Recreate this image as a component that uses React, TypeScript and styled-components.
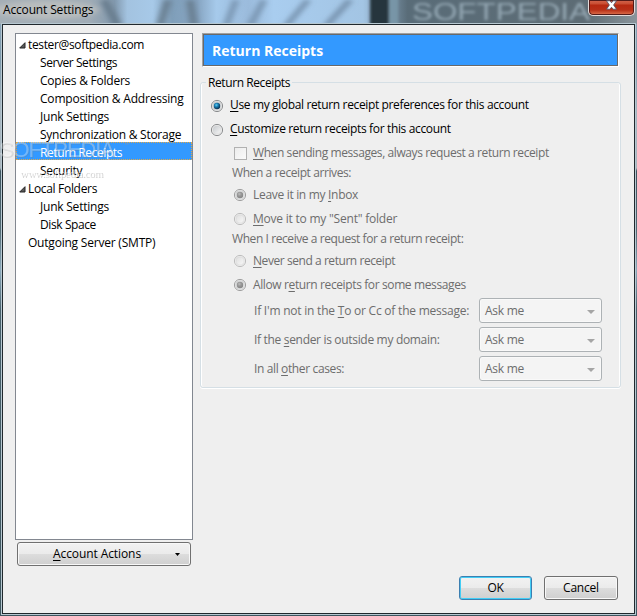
import React from 'react';
import styled, { createGlobalStyle, css } from 'styled-components';

const GlobalStyle = createGlobalStyle`
  * { box-sizing: border-box; }
  body {
    margin: 0;
    overflow: hidden;
    background: #efefef;
    font: 12px/18px "Open Sans", "Noto Sans", sans-serif;
    color: #000;
  }
`;

/* ---------- Window chrome ---------- */

const Window = styled.div`
  width: 637px;
  height: 616px;
  display: flex;
  flex-direction: column;
  position: relative;
  overflow: hidden;
  background: linear-gradient(#8fa9be 0, #7b98aa 60px, #a4b4bf 110px, #a9b5bd 168px, #3d5560 171px, #506973 230px, #8ba9bb 270px, #47606b 310px, #3e565f 100%);
`;

const TitleBar = styled.header`
  height: 24px;
  flex: none;
  display: flex;
  justify-content: space-between;
  padding-left: 3px;
  position: relative;
`;

const Glass = styled.svg`
  position: absolute;
  inset: 0;
`;

const Title = styled.h1`
  margin: 0;
  position: relative;
  font-size: 12px;
  font-weight: 400;
  line-height: 20px;
  letter-spacing: -0.16px;
`;

const CloseButton = styled.button`
  position: relative;
  width: 47px;
  height: 16px;
  margin: 0 2px 0 0;
  padding: 0;
  display: flex;
  justify-content: center;
  border: 1px solid #e3dada;
  border-top: 0;
  border-radius: 0 0 5px 5px;
  box-shadow: inset 0 0 0 1px #551b18;
  background: linear-gradient(#d2664e 0, #c94d32 4px, #b62810 5px, #b83018 10px, #df7552 15px);
`;

const Client = styled.main`
  flex: 1;
  position: relative;
  margin: 0 2px 2px 2px;
  display: flex;
  flex-direction: column;
  border: 1px solid #20282d;
  outline: 1px solid #b7c8d1;
  background: #efefef;
  padding: 8px 13px 0 12px;
`;

const Columns = styled.div`
  display: flex;
  gap: 7px;
`;

const Sidebar = styled.div`
  display: flex;
  flex-direction: column;
  width: 178px;
  flex: none;
`;

/* ---------- Account tree ---------- */

const Tree = styled.ul`
  list-style: none;
  margin: 0 0 2px;
  padding: 0;
  height: 507px;
  border: 1px solid #828790;
  background: #fff;
`;

const TreeRow = styled.li<{ $level: number; $selected?: boolean }>`
  height: 18px;
  display: flex;
  align-items: center;
  padding-top: 4px;
  padding-left: ${p => (p.$level === 0 ? 3 : 24)}px;
  white-space: nowrap;
  line-height: 18px;
  ${p => p.$selected && css`
    background: #3399ff;
    color: #fff;
    outline: 1px dotted #e0a848;
    outline-offset: -1px;
  `}
`;

const TwistySlot = styled.span`
  width: 9px;
  height: 18px;
  display: flex;
  align-items: center;
`;

const Text = styled.span<{ $track?: number }>`
  white-space: nowrap;
  letter-spacing: ${p => p.$track ?? 0}px;
`;

const Mnemonic = styled.span`
  text-decoration: underline;
  text-decoration-thickness: 1px;
  text-underline-offset: 2px;
`;

/* ---------- Settings panel ---------- */

const Panel = styled.section`
  flex: 1;
  min-width: 0;
`;

const PanelHeader = styled.div`
  margin: 0 2px 0 2px;
  height: 34px;
  border: 1px solid;
  border-color: #a0a0a0 #fff #fff #a0a0a0;
`;

const PanelTitle = styled.h2`
  margin: 0;
  height: 32px;
  border: 1px solid #696969;
  background: #3399ff;
  color: #fff;
  font-size: 14px;
  font-weight: 700;
  line-height: 32px;
  padding-left: 8px;
`;

const Group = styled.fieldset`
  margin: 6px 0 0;
  padding: 0 0 0 9px;
  height: 315px;
  min-width: 0;
  border: 1px solid #d5dfe5;
  border-radius: 3px;
  box-shadow: inset -1px 0 #fff, inset 1px 0 #fff, 0 1px #fff;
`;

const Legend = styled.legend`
  margin-left: -4px;
  padding: 0 2px;
  height: 19px;
  line-height: 20px;
`;

const Option = styled.label<{ $nested?: boolean; $disabled?: boolean }>`
  display: flex;
  align-items: center;
  gap: 6px;
  height: 24px;
  padding-top: 2px;
  padding-left: ${p => (p.$nested ? 23 : 0)}px;
  color: ${p => (p.$disabled ? '#6d6d6d' : '#000')};
`;

const Caption = styled.div`
  padding-left: 22px;
  height: 18px;
  line-height: 18px;
  color: #6d6d6d;
`;

const RadioIcon = styled.svg<{ $raised?: boolean }>`
  flex: none;
  width: 14px;
  height: 14px;
  margin-top: ${p => (p.$raised ? 0 : 2)}px;
`;

const CheckBox = styled.span`
  flex: none;
  width: 13px;
  height: 13px;
  margin-left: 1px;
  border: 1px solid #b1b1b1;
  background: linear-gradient(135deg, #ececec, #fbfbfb);
`;

const SelectGrid = styled.div`
  display: grid;
  grid-template-columns: 225px 123px;
  grid-auto-rows: 25px;
  row-gap: 4px;
  align-items: center;
  padding-left: 44px;
  margin-top: 2px;
  color: #6d6d6d;
`;

const Select = styled.div`
  height: 25px;
  display: flex;
  align-items: center;
  justify-content: space-between;
  padding: 0 6px 0 5px;
  border: 1px solid #adb2b5;
  border-radius: 3px;
  background: #f4f4f4;
  box-shadow: inset 0 0 0 1px #f9f9f9;
`;

const Arrow = styled.svg`
  margin-top: 2px;
`;

/* ---------- Buttons ---------- */

const Button = styled.button<{ $width: number; $default?: boolean }>`
  width: ${p => p.$width}px;
  height: 24px;
  padding: 0;
  display: flex;
  align-items: center;
  justify-content: center;
  font: inherit;
  color: #000;
  border: 1px solid ${p => (p.$default ? '#3c7fb1' : '#707070')};
  border-radius: 3px;
  box-shadow: inset 0 0 0 1px ${p => (p.$default ? '#42cdf5' : '#f8f8f8')};
  background: linear-gradient(#f2f2f2 0, #ebebeb 48%, #dddddd 50%, #cfcfcf 100%);
`;

const ActionsButton = styled(Button)`
  margin-left: 2px;
  justify-content: space-between;
  padding: 0 10px 0 35px;
`;

const Footer = styled.footer`
  display: flex;
  justify-content: flex-end;
  gap: 12px;
  padding: 10px 3px 0 0;
`;

const Watermark = styled.svg`
  position: absolute;
  left: 0;
  top: 133px;
  pointer-events: none;
`;

/* ---------- Pieces ---------- */

/** Renders a label in which "&x" marks x as the access key. "&&" is a plain ampersand. */
function Label({ text, track }: { text: string; track: number }) {
  const parts = text.split(/(&.)/);
  return (
    <Text $track={track}>
      {parts.map((part, i) => {
        if (part === '&&') return '&';
        return part[0] === '&' ? <Mnemonic key={i}>{part[1]}</Mnemonic> : part;
      })}
    </Text>
  );
}

function Radio({ checked, disabled }: { checked?: boolean; disabled?: boolean }) {
  const id = `radio-${checked ? 'on' : 'off'}-${disabled ? 'dim' : 'live'}`;
  return (
    <RadioIcon viewBox="0 0 14 14" $raised={disabled}>
      <defs>
        <linearGradient id={id} x1="0" y1="0" x2="1" y2="1">
          <stop offset="0" stopColor={disabled ? '#dedede' : '#c5c9cd'} />
          <stop offset="1" stopColor="#f8f8f8" />
        </linearGradient>
        <radialGradient id={`${id}-dot`} cx="0.4" cy="0.35" r="0.65">
          <stop offset="0" stopColor={disabled ? '#bdbdbd' : '#5fd0f5'} />
          <stop offset="0.45" stopColor={disabled ? '#999' : '#187bb0'} />
          <stop offset="1" stopColor={disabled ? '#858585' : '#0c2d4b'} />
        </radialGradient>
      </defs>
      <circle cx="7" cy="7" r="5.6" fill="#f6f6f6" stroke={disabled ? (checked ? '#a0a0a0' : '#bdbdbd') : '#8b8d8f'} />
      <circle cx="7" cy="7" r="4.2" fill={`url(#${id})`} stroke={checked ? '#b0b3b5' : '#d0d0d0'} strokeWidth="0.6" />
      {checked && <circle cx="7" cy="7" r="3.2" fill={`url(#${id}-dot)`} />}
    </RadioIcon>
  );
}

function Twisty() {
  return (
    <TwistySlot>
      <svg width="7" height="7" viewBox="0 0 7 7">
        <path d="M6 0.7V6H0.7Z" fill="#595959" stroke="#262626" />
      </svg>
    </TwistySlot>
  );
}

type Node = { text: string; track: number; level: number; open?: boolean; selected?: boolean };

const nodes: Node[] = [
  { text: 'tester@softpedia.com', track: -0.35, level: 0, open: true },
  { text: 'Server Settings', track: -0.43, level: 1 },
  { text: 'Copies && Folders', track: -0.23, level: 1 },
  { text: 'Composition && Addressing', track: -0.2, level: 1 },
  { text: 'Junk Settings', track: -0.22, level: 1 },
  { text: 'Synchronization && Storage', track: -0.26, level: 1 },
  { text: 'Return Receipts', track: -0.41, level: 1, selected: true },
  { text: 'Security', track: -0.32, level: 1 },
  { text: 'Local Folders', track: -0.32, level: 0, open: true },
  { text: 'Junk Settings', track: -0.22, level: 1 },
  { text: 'Disk Space', track: -0.4, level: 1 },
  { text: 'Outgoing Server (SMTP)', track: -0.21, level: 0 },
];

const rules = [
  { text: "If I'm not in the &To or Cc of the message:", track: -0.22 },
  { text: 'If the &sender is outside my domain:', track: -0.32 },
  { text: 'In all &other cases:', track: -0.37 },
];

function GlassBackdrop() {
  return (
    <Glass width="637" height="24" viewBox="0 0 637 24">
      <defs>
        <filter id="soft" x="-5%" y="-50%" width="110%" height="200%">
          <feGaussianBlur stdDeviation="3 2" />
        </filter>
        <filter id="softer"><feGaussianBlur stdDeviation="1.5" /></filter>
        <linearGradient id="sky">
          <stop offset="0" stopColor="#a5afb6" />
          <stop offset="0.14" stopColor="#a0acb6" />
          <stop offset="0.18" stopColor="#8299ae" />
          <stop offset="0.2" stopColor="#a3c3e0" />
          <stop offset="0.24" stopColor="#a7c9e8" />
          <stop offset="0.27" stopColor="#809fba" />
          <stop offset="0.31" stopColor="#87a5c2" />
          <stop offset="0.34" stopColor="#a6caeb" />
          <stop offset="0.39" stopColor="#9bbbdc" />
          <stop offset="0.43" stopColor="#a9cdef" />
          <stop offset="0.57" stopColor="#a3c5e4" />
          <stop offset="0.64" stopColor="#596c78" />
          <stop offset="0.92" stopColor="#5d6c75" />
          <stop offset="1" stopColor="#89949b" />
        </linearGradient>
      </defs>
      <rect width="637" height="24" fill="url(#sky)" />
      <g filter="url(#soft)" fill="none">
        <ellipse cx="46" cy="10" rx="52" ry="9" fill="#b9bdbe" />
        <path d="M104 0L118 26M168 0L160 26M190 0L194 26" stroke="#65798a" strokeWidth="7" />
        <path d="M236 0L226 26M264 0L250 26M308 0L286 26M350 0L326 26" stroke="#6f8aa5" strokeWidth="5" />
      </g>
      <g filter="url(#softer)">
        <path d="M370 -3H389V28H370Z" fill="#26343e" />
        <path d="M389 -3H398V28H389Z" fill="#7895a7" />
        <text x="412" y="20" textLength="178" lengthAdjust="spacingAndGlyphs" fontFamily="Liberation Sans" fontSize="24" fontWeight="400" fill="#adc0cd" opacity="0.7">SOFTPEDIA</text>
      </g>
    </Glass>
  );
}

export default function App() {
  return (
    <Window>
      <GlobalStyle />
      <TitleBar>
        <GlassBackdrop />
        <Title>Account Settings</Title>
        <CloseButton aria-label="Close">
          <svg width="13" height="11" viewBox="0 0 13 11">
            <path d="M1.5 0.8H5L6.5 2.8L8 0.8H11.5L8.6 5L11.5 9.2H8L6.5 7.2L5 9.2H1.5L4.4 5Z" fill="#fff" stroke="#4a5064" strokeWidth="0.8" />
          </svg>
        </CloseButton>
      </TitleBar>
      <Client>
        <Columns>
          <Sidebar>
            <Tree>
              {nodes.map((n, i) => (
                <TreeRow key={i} $level={n.level} $selected={n.selected}>
                  {n.level === 0 && (n.open ? <Twisty /> : <TwistySlot />)}
                  <Label text={n.text} track={n.track} />
                </TreeRow>
              ))}
            </Tree>
            <ActionsButton $width={174}>
              <Label text="&Account Actions" track={-0.09} />
              <svg width="5" height="3" viewBox="0 0 5 3"><path d="M0 0H5L2.5 3Z" /></svg>
            </ActionsButton>
          </Sidebar>
          <Panel>
            <PanelHeader><PanelTitle>Return Receipts</PanelTitle></PanelHeader>
            <Group>
              <Legend><Label text="Return Receipts" track={-0.41} /></Legend>
              <Option>
                <Radio checked />
                <Label text="&Use my global return receipt preferences for this account" track={-0.36} />
              </Option>
              <Option>
                <Radio />
                <Label text="&Customize return receipts for this account" track={-0.345} />
              </Option>
              <Option $nested $disabled>
                <CheckBox />
                <Label text="&When sending messages, always request a return receipt" track={-0.41} />
              </Option>
              <Caption><Label text="When a receipt arrives:" track={-0.41} /></Caption>
              <Option $nested $disabled>
                <Radio checked disabled />
                <Label text="Leave it in my &Inbox" track={-0.31} />
              </Option>
              <Option $nested $disabled>
                <Radio disabled />
                <Label text={'&Move it to my "Sent" folder'} track={-0.22} />
              </Option>
              <Caption><Label text="When I receive a request for a return receipt:" track={-0.42} /></Caption>
              <Option $nested $disabled>
                <Radio disabled />
                <Label text="&Never send a return receipt" track={-0.44} />
              </Option>
              <Option $nested $disabled>
                <Radio checked disabled />
                <Label text="Allow r&eturn receipts for some messages" track={-0.38} />
              </Option>
              <SelectGrid>
                {rules.map(rule => (
                  <React.Fragment key={rule.text}>
                    <Label text={rule.text} track={rule.track} />
                    <Select>
                      <Label text="Ask me" track={-0.27} />
                      <Arrow width="8" height="4" viewBox="0 0 8 4"><path d="M0 0H8L4 4Z" fill="#a5a5a5" /></Arrow>
                    </Select>
                  </React.Fragment>
                ))}
              </SelectGrid>
            </Group>
          </Panel>
        </Columns>
        <Footer>
          <Button $width={73} $default><Label text="OK" track={-0.3} /></Button>
          <Button $width={74}><Label text="Cancel" track={-0.2} /></Button>
        </Footer>
      </Client>
      <Watermark width="135" height="50" viewBox="0 0 135 50">
        <g fontFamily="Liberation Sans" fontSize="22">
          <text x="0" y="25" textLength="116" fill="#777" opacity="0.2">SOFTPEDIA</text>
          <text x="-1" y="24" textLength="116" fill="#fff" opacity="0.3">SOFTPEDIA</text>
          <text x="124" y="13" fontSize="5" fill="#999" opacity="0.6">™</text>
        </g>
        <g fontFamily="Liberation Serif" fontSize="11">
          <text x="21" y="45" textLength="83" fill="#777" opacity="0.35">www.softpedia.com</text>
          <text x="20" y="44" textLength="83" fill="#fff" opacity="0.6">www.softpedia.com</text>
        </g>
      </Watermark>
    </Window>
  );
}
